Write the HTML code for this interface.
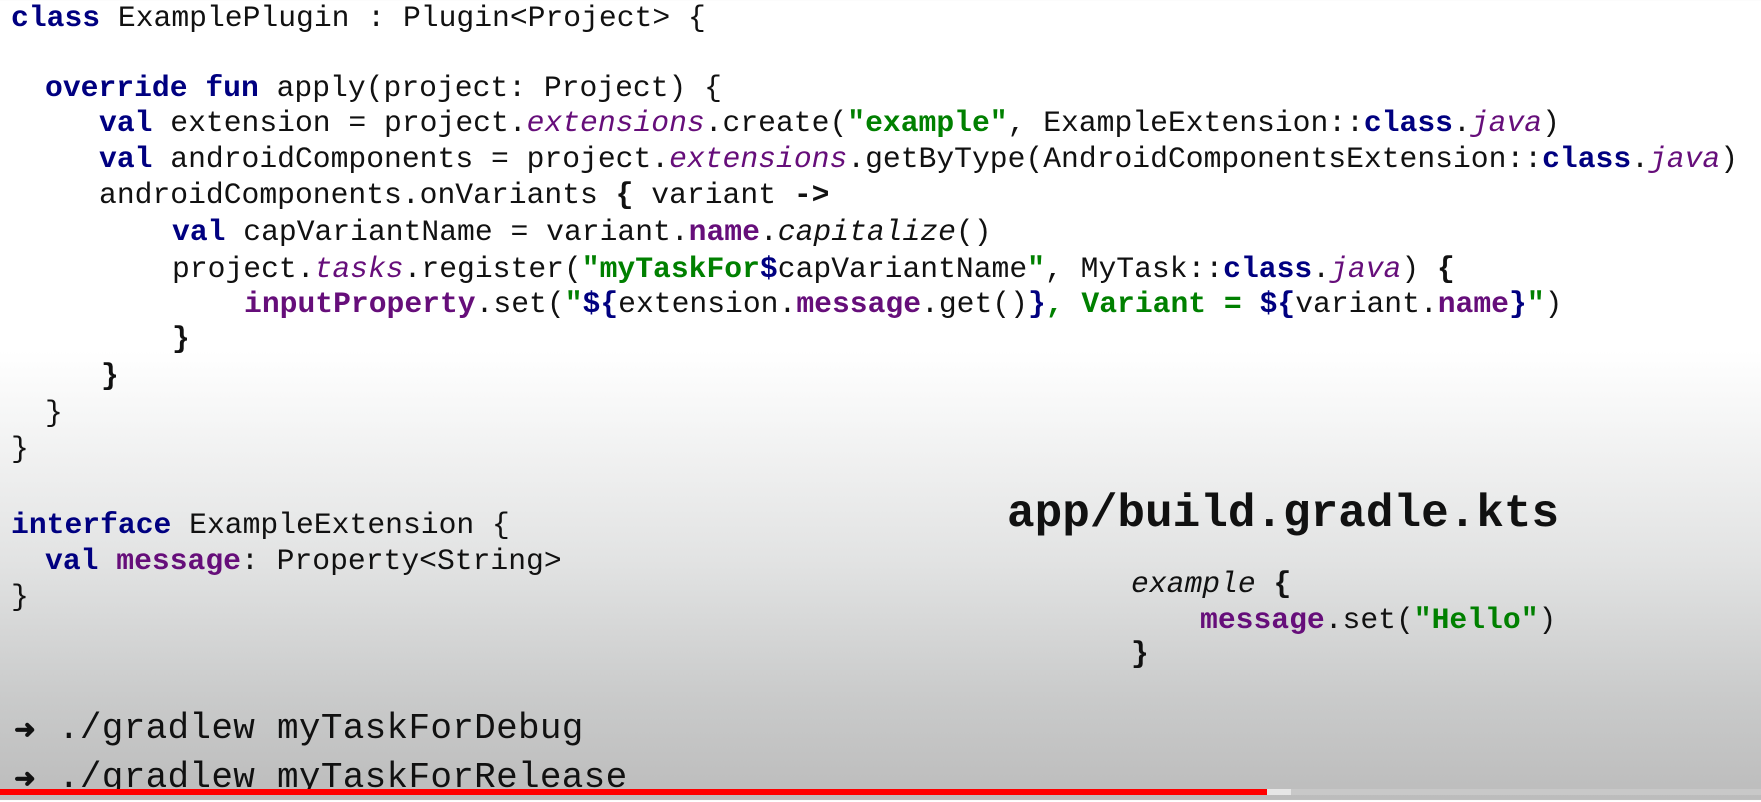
<!DOCTYPE html>
<html><head><meta charset="utf-8"><style>
html,body{margin:0;padding:0}
body{width:1761px;height:800px;position:relative;overflow:hidden;
background:linear-gradient(to bottom,#ffffff 0px,#ffffff 350px,#e2e3e3 560px,#c9caca 700px,#bcbcbc 800px);
font-family:"Liberation Mono",monospace;color:#111}
.l{position:absolute;white-space:pre;font-size:29.7px;line-height:36px;height:36px}
.k{color:#000080;font-weight:bold}
.p{color:#660e7a;font-weight:bold}
.i{color:#660e7a;font-style:italic}
.it{font-style:italic}
.s{color:#008000;font-weight:bold}
.big{position:absolute;font-weight:bold;font-size:46px;line-height:50px;white-space:pre;left:1007px;top:489px;color:#111}
.g{position:absolute;white-space:pre;font-size:36px;line-height:44px;left:14px;color:#111;letter-spacing:0.3px}
</style></head><body>
<div class="l" style="left:11px;top:0px"><span class="k">class</span> ExamplePlugin : Plugin&lt;Project&gt; {</div>
<div class="l" style="left:45px;top:70px"><span class="k">override fun</span> apply(project: Project) {</div>
<div class="l" style="left:99px;top:105px"><span class="k">val</span> extension = project.<span class="i">extensions</span>.create(<span class="s">"example"</span>, ExampleExtension::<span class="k">class</span>.<span class="i">java</span>)</div>
<div class="l" style="left:99px;top:141px"><span class="k">val</span> androidComponents = project.<span class="i">extensions</span>.getByType(AndroidComponentsExtension::<span class="k">class</span>.<span class="i">java</span>)</div>
<div class="l" style="left:99px;top:177px">androidComponents.onVariants <b>{</b> variant <b>-&gt;</b></div>
<div class="l" style="left:172px;top:214px"><span class="k">val</span> capVariantName = variant.<span class="p">name</span>.<span class="it">capitalize</span>()</div>
<div class="l" style="left:172px;top:251px">project.<span class="i">tasks</span>.register(<span class="s">"myTaskFor</span><span class="k">$</span>capVariantName<span class="s">"</span>, MyTask::<span class="k">class</span>.<span class="i">java</span>) <b>{</b></div>
<div class="l" style="left:244px;top:286px"><span class="p">inputProperty</span>.set(<span class="s">"</span><span class="k">${</span>extension.<span class="p">message</span>.get()<span class="k">}</span><span class="s">, Variant = </span><span class="k">${</span>variant.<span class="p">name</span><span class="k">}</span><span class="s">"</span>)</div>
<div class="l" style="left:172px;top:321px"><b>}</b></div>
<div class="l" style="left:101px;top:358px"><b>}</b></div>
<div class="l" style="left:45px;top:395px">}</div>
<div class="l" style="left:11px;top:431px">}</div>
<div class="l" style="left:11px;top:507px"><span class="k">interface</span> ExampleExtension {</div>
<div class="l" style="left:45px;top:543px"><span class="k">val</span> <span class="p">message</span>: Property&lt;String&gt;</div>
<div class="l" style="left:11px;top:579px">}</div>
<div class="big">app/build.gradle.kts</div>
<div class="l" style="left:1131px;top:566px"><span class="it">example</span> <b>{</b></div>
<div class="l" style="left:1200px;top:602px"><span class="p">message</span>.set(<span class="s">"Hello"</span>)</div>
<div class="l" style="left:1131px;top:636px"><b>}</b></div>
<div class="g" style="top:707px"><span style="font-size:26px;font-weight:bold">➜</span> ./gradlew myTaskForDebug</div>
<div class="g" style="top:756px"><span style="font-size:26px;font-weight:bold">➜</span> ./gradlew myTaskForRelease</div>
<div style="position:absolute;left:0;top:789px;width:1761px;height:6px;background:#c8c8c8"></div>
<div style="position:absolute;left:1267px;top:789px;width:24px;height:6px;background:#e6e6e6"></div>
<div style="position:absolute;left:0;top:789px;width:1267px;height:6px;background:#ff0000"></div>
</body></html>
